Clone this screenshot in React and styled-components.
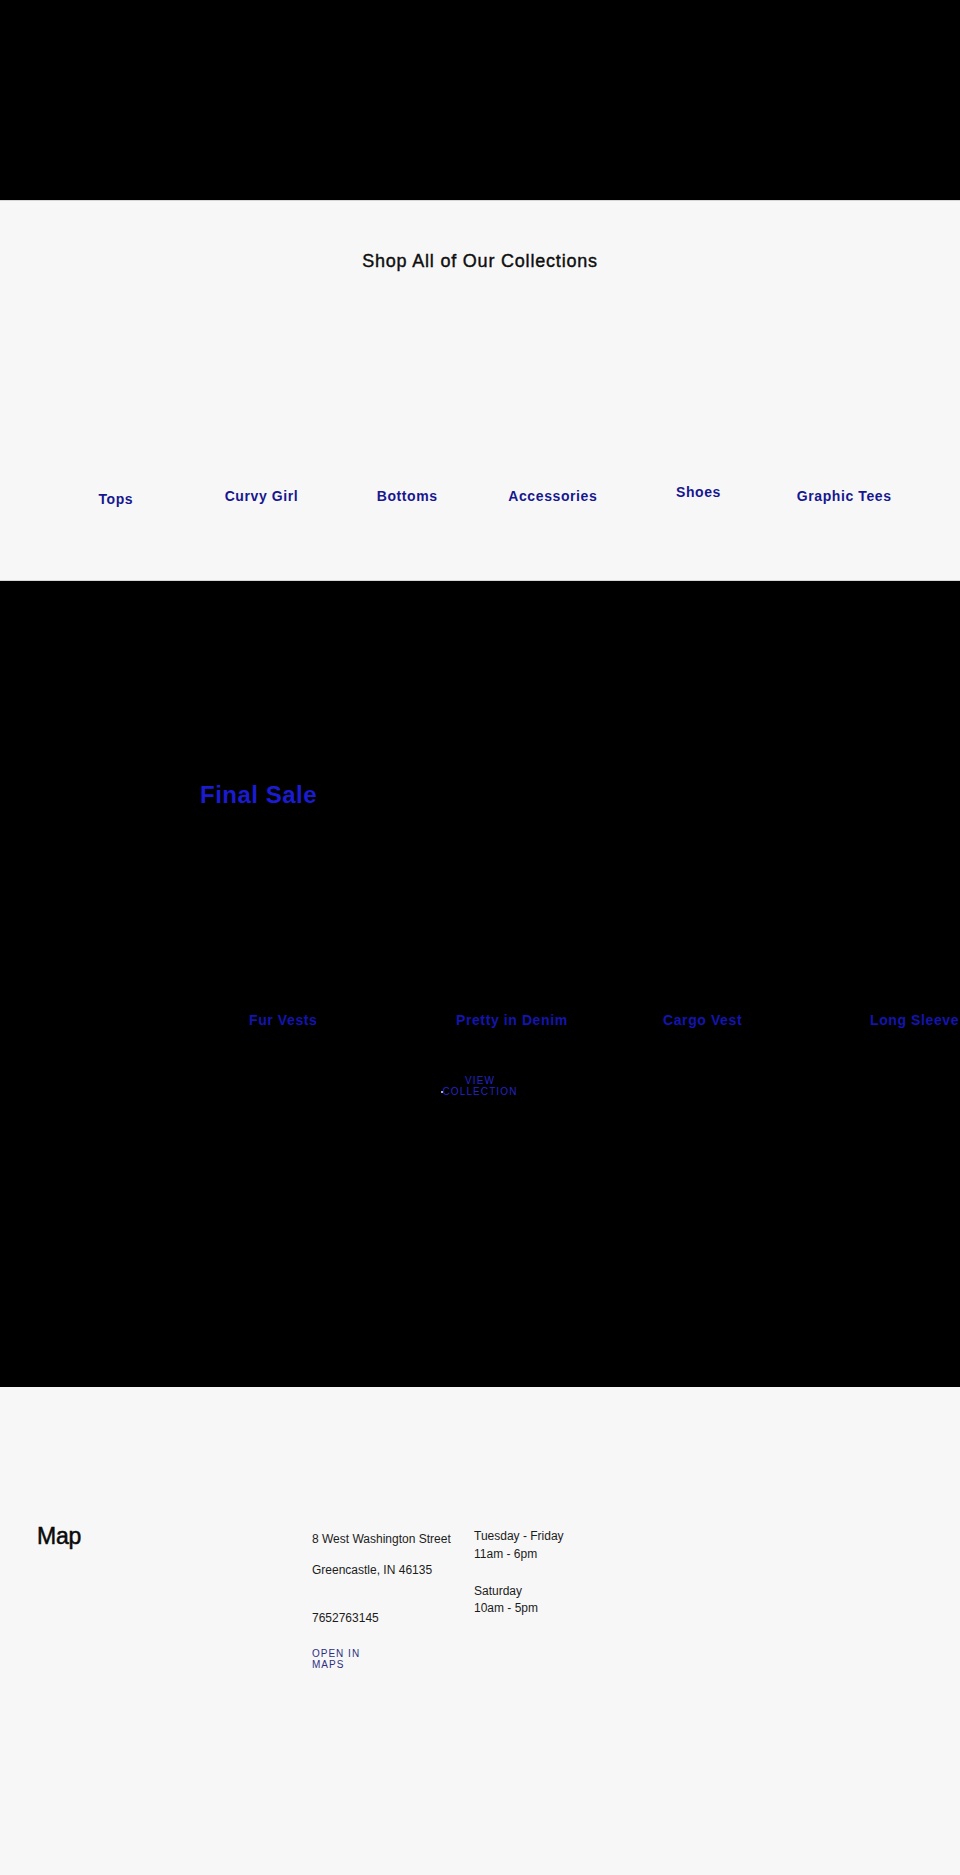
import React from "react";
import styled, { createGlobalStyle } from "styled-components";

const GlobalStyle = createGlobalStyle`
  html, body {
    margin: 0;
    padding: 0;
    background: #f7f7f7;
    font-family: "Liberation Sans", Arial, sans-serif;
    color: #121212;
  }
  * { box-sizing: border-box; }
`;

const Page = styled.div`
  width: 960px;
  min-height: 1875px;
  background: #f7f7f7;
  overflow: hidden;
`;

const Hero = styled.div`
  height: 200px;
  background: #000;
`;

const CollectionsSection = styled.section`
  border-top: 1px solid #d6d6d6;
  border-bottom: 1px solid #d6d6d6;
  padding: 49px 43px 75px;
`;

const SectionTitle = styled.h2`
  margin: 0;
  text-align: center;
  font-size: 18px;
  line-height: 22px;
  font-weight: 400;
  letter-spacing: 0.8px;
  color: #0e0e0e;
  -webkit-text-stroke: 0.4px #0e0e0e;
`;

const CardGrid = styled.div`
  display: grid;
  grid-template-columns: repeat(6, 1fr);
  margin-top: 215px;
`;

const CardTitle = styled.a`
  display: block;
  text-align: center;
  font-size: 14px;
  line-height: 18px;
  font-weight: 700;
  letter-spacing: 0.6px;
  color: #17178f;
  text-decoration: none;
  transform: translateY(${(p) => p.$shift || 0}px);
`;

const FeatureSection = styled.section`
  background: #000;
  height: 806px;
  padding: 201px 0 0 200px;
`;

const FeatureTitle = styled.h2`
  margin: 0;
  font-size: 24px;
  line-height: 26px;
  font-weight: 700;
  letter-spacing: 0.5px;
  color: #1b1bd0;
`;

const Slider = styled.ul`
  list-style: none;
  margin: 203px 0 0 49px;
  padding: 0;
  display: flex;
  overflow: hidden;
`;

const Slide = styled.li`
  flex: 0 0 207px;
`;

const SlideTitle = styled.a`
  display: block;
  white-space: nowrap;
  font-size: 14px;
  line-height: 18px;
  font-weight: 700;
  letter-spacing: 0.6px;
  color: #1414b0;
  text-decoration: none;
`;

const ViewWrap = styled.div`
  display: flex;
  justify-content: center;
  margin: 46px 0 0 -200px;
`;

const ViewButton = styled.a`
  width: 78px;
  text-align: center;
  font-size: 10px;
  line-height: 11px;
  letter-spacing: 1.1px;
  text-transform: uppercase;
  color: #2424c4;
  text-decoration: none;
`;

const Dotted = styled.span`
  position: relative;
  &::before {
    content: "";
    position: absolute;
    left: -2px;
    top: 5px;
    width: 2px;
    height: 2px;
    border-radius: 50%;
    background: #e8e8e8;
  }
`;

const MapSection = styled.section`
  display: flex;
  padding: 137px 0 0 37px;
  height: 487px;
`;

const MapTitle = styled.h2`
  margin: 0;
  width: 275px;
  font-size: 23px;
  line-height: 24px;
  font-weight: 400;
  letter-spacing: -0.2px;
  color: #0a0a0a;
  -webkit-text-stroke: 0.5px #0a0a0a;
`;

const InfoColumn = styled.div`
  width: ${(p) => p.$width || "auto"};
  padding-top: ${(p) => p.$top || 0}px;
`;

const InfoText = styled.p`
  margin: 0 0 ${(p) => p.$gap || 0}px;
  font-size: 12px;
  line-height: ${(p) => p.$lh || 18}px;
  color: #1c1c1c;
`;

const MapsButton = styled.a`
  display: block;
  width: 60px;
  margin-top: 22px;
  font-size: 10px;
  line-height: 10.5px;
  letter-spacing: 1px;
  text-transform: uppercase;
  color: #2e2e82;
  text-decoration: none;
`;

const collections = [
  { name: "Tops", shift: 3 },
  { name: "Curvy Girl", shift: 0 },
  { name: "Bottoms", shift: 0 },
  { name: "Accessories", shift: 0 },
  { name: "Shoes", shift: -4 },
  { name: "Graphic Tees", shift: 0 },
];

const slides = ["Fur Vests", "Pretty in Denim", "Cargo Vest", "Long Sleeve"];

const App = () => {
  return (
    <Page>
      <GlobalStyle />
      <Hero />

      <CollectionsSection>
        <SectionTitle>Shop All of Our Collections</SectionTitle>
        <CardGrid>
          {collections.map((c) => (
            <CardTitle key={c.name} $shift={c.shift}>
              {c.name}
            </CardTitle>
          ))}
        </CardGrid>
      </CollectionsSection>

      <FeatureSection>
        <FeatureTitle>Final Sale</FeatureTitle>
        <Slider>
          {slides.map((s) => (
            <Slide key={s}>
              <SlideTitle>{s}</SlideTitle>
            </Slide>
          ))}
        </Slider>
        <ViewWrap>
          <ViewButton>
            View <Dotted>Collection</Dotted>
          </ViewButton>
        </ViewWrap>
      </FeatureSection>

      <MapSection>
        <MapTitle>Map</MapTitle>
        <InfoColumn $width="162px" $top={6}>
          <InfoText $gap={13}>8 West Washington Street</InfoText>
          <InfoText $gap={30}>Greencastle, IN 46135</InfoText>
          <InfoText>7652763145</InfoText>
          <MapsButton>Open in maps</MapsButton>
        </InfoColumn>
        <InfoColumn $top={4}>
          <InfoText $lh={17.5}>Tuesday - Friday</InfoText>
          <InfoText $lh={17.5} $gap={19.5}>
            11am - 6pm
          </InfoText>
          <InfoText $lh={17.5}>Saturday</InfoText>
          <InfoText $lh={17.5}>10am - 5pm</InfoText>
        </InfoColumn>
      </MapSection>
    </Page>
  );
};

export default App;
